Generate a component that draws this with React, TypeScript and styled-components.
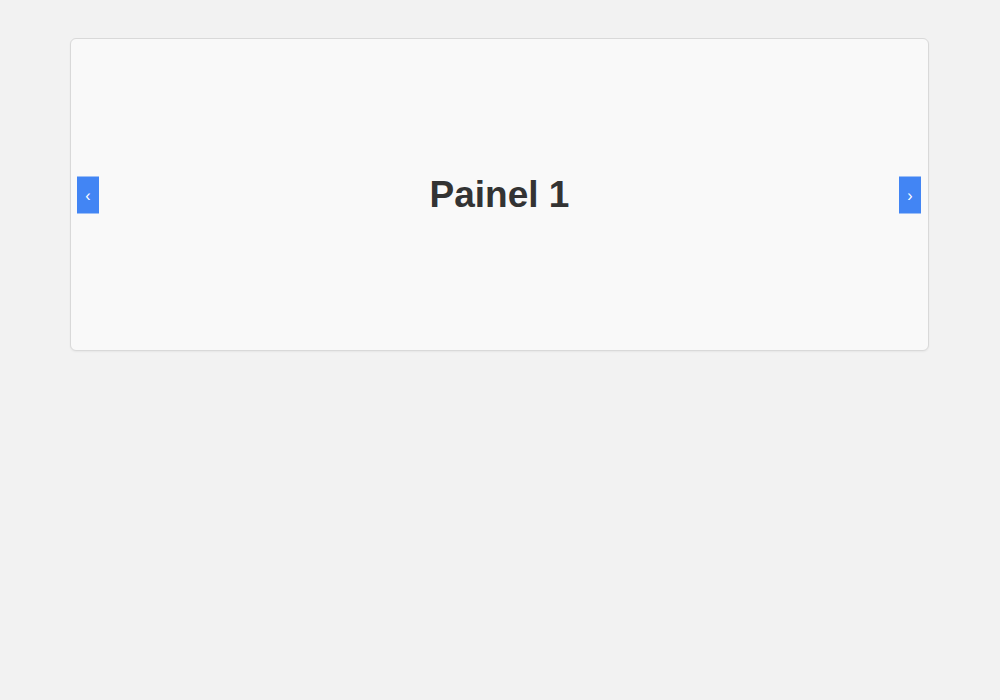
import React, { useState } from "react";
import styled, { createGlobalStyle } from "styled-components";

const Global = createGlobalStyle`
  html, body { margin: 0; padding: 0; background: #f2f2f2; }
  body { font-family: "Liberation Sans", Arial, sans-serif; }
`;

const Page = styled.div`
  padding: 38px 0 0 70px;
  min-height: 700px;
  box-sizing: border-box;
`;

const Carousel = styled.div`
  position: relative;
  width: 859px;
  height: 313px;
  box-sizing: border-box;
  background: #f9f9f9;
  border: 1px solid #d9d9d9;
  border-radius: 6px;
  box-shadow: 0 1px 2px rgba(0, 0, 0, 0.05);
  display: flex;
  align-items: center;
  justify-content: center;
  overflow: hidden;
`;

const Title = styled.h2`
  margin: 0;
  font-size: 37px;
  font-weight: 700;
  color: #333;
`;

const NavButton = styled.button<{ $side: "left" | "right" }>`
  position: absolute;
  top: 50%;
  transform: translateY(-50%);
  ${(p) => (p.$side === "left" ? "left: 6px;" : "right: 7px;")}
  width: 22px;
  height: 37px;
  padding: 0;
  border: none;
  background: #4285f4;
  color: #fff;
  font-family: "Liberation Sans", Arial, sans-serif;
  font-size: 16px;
  line-height: 37px;
  cursor: pointer;
`;

const panels = ["Painel 1", "Painel 2", "Painel 3"];

export default function App() {
  const [i, setI] = useState(0);
  return (
    <>
      <Global />
      <Page>
        <Carousel>
          <NavButton $side="left" onClick={() => setI((i + panels.length - 1) % panels.length)}>‹</NavButton>
          <Title>{panels[i]}</Title>
          <NavButton $side="right" onClick={() => setI((i + 1) % panels.length)}>›</NavButton>
        </Carousel>
      </Page>
    </>
  );
}
